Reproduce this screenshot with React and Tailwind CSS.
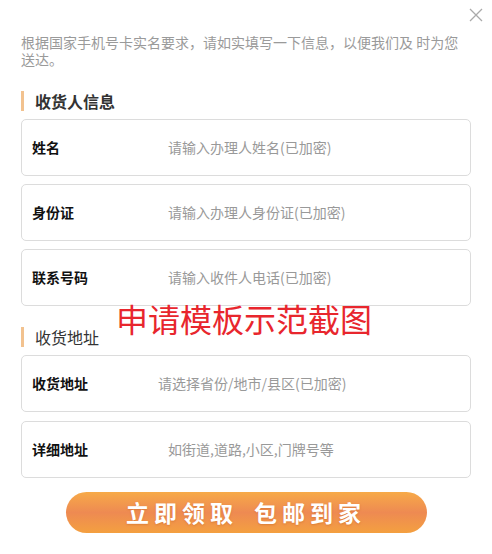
import React from 'react';

const FONT = { fontFamily: '"Microsoft YaHei", "Noto Sans CJK SC", "Noto Sans", sans-serif' };

const Field = ({ label, placeholder, offset = 'pl-[136px]' }) => (
  <div className="h-[57px] rounded-[5px] border border-[#dcdcdc] flex items-center pl-[10px]">
    <span className="absolute text-[14px] font-bold text-[#111]">{label}</span>
    <span className={`${offset} text-[14px] text-[#999]`}>{placeholder}</span>
  </div>
);

const SectionTitle = ({ children, bold }) => (
  <div className="flex items-center h-[20px]">
    <span className="w-[3px] h-[20px] bg-[#f2c28f]" />
    <span className={`ml-[11px] text-[16px] text-[#333] ${bold ? 'font-bold' : ''}`}>{children}</span>
  </div>
);

export default function App() {
  return (
    <div className="w-[492px] h-[554px] bg-white relative px-[21px] overflow-hidden" style={FONT}>
      <button className="absolute right-[9px] top-[8px] text-[#aaa]">
        <svg width="14" height="14" viewBox="0 0 14 14" fill="none" stroke="currentColor" strokeWidth="1.3">
          <path d="M1 1 L13 13 M13 1 L1 13" />
        </svg>
      </button>

      <p className="pt-[34px] text-[14px] leading-[17px] text-[#9a9a9a]">
        根据国家手机号卡实名要求，请如实填写一下信息，以便我们及 时为您送达。
      </p>

      <div className="mt-[23px]">
        <SectionTitle bold>收货人信息</SectionTitle>
      </div>

      <div className="mt-[8px] flex flex-col gap-[8px]">
        <Field label="姓名" placeholder="请输入办理人姓名(已加密)" />
        <Field label="身份证" placeholder="请输入办理人身份证(已加密)" />
        <Field label="联系号码" placeholder="请输入收件人电话(已加密)" />
      </div>

      <div className="mt-[21px]">
        <SectionTitle>收货地址</SectionTitle>
      </div>

      <div className="mt-[8px] flex flex-col gap-[9px]">
        <Field label="收货地址" placeholder="请选择省份/地市/县区(已加密)" offset="pl-[126px]" />
        <Field label="详细地址" placeholder="如街道,道路,小区,门牌号等" />
      </div>

      <div className="mt-[14px] flex justify-center">
        <button className="w-[361px] h-[41px] rounded-full bg-[linear-gradient(to_bottom,#f7aa48_0%,#ee8a52_50%,#f4a040_100%)] text-white text-[23px] font-bold tracking-[5px] [text-shadow:0_1px_2px_rgba(180,80,20,0.35)] flex items-center justify-center">
          <span>立即领取</span>
          <span className="ml-[16px]">包邮到家</span>
        </button>
      </div>

      <div className="absolute left-[116px] top-[299px] text-[32px] leading-[38px] text-[#e8262d] pointer-events-none">
        申请模板示范截图
      </div>
    </div>
  );
}
